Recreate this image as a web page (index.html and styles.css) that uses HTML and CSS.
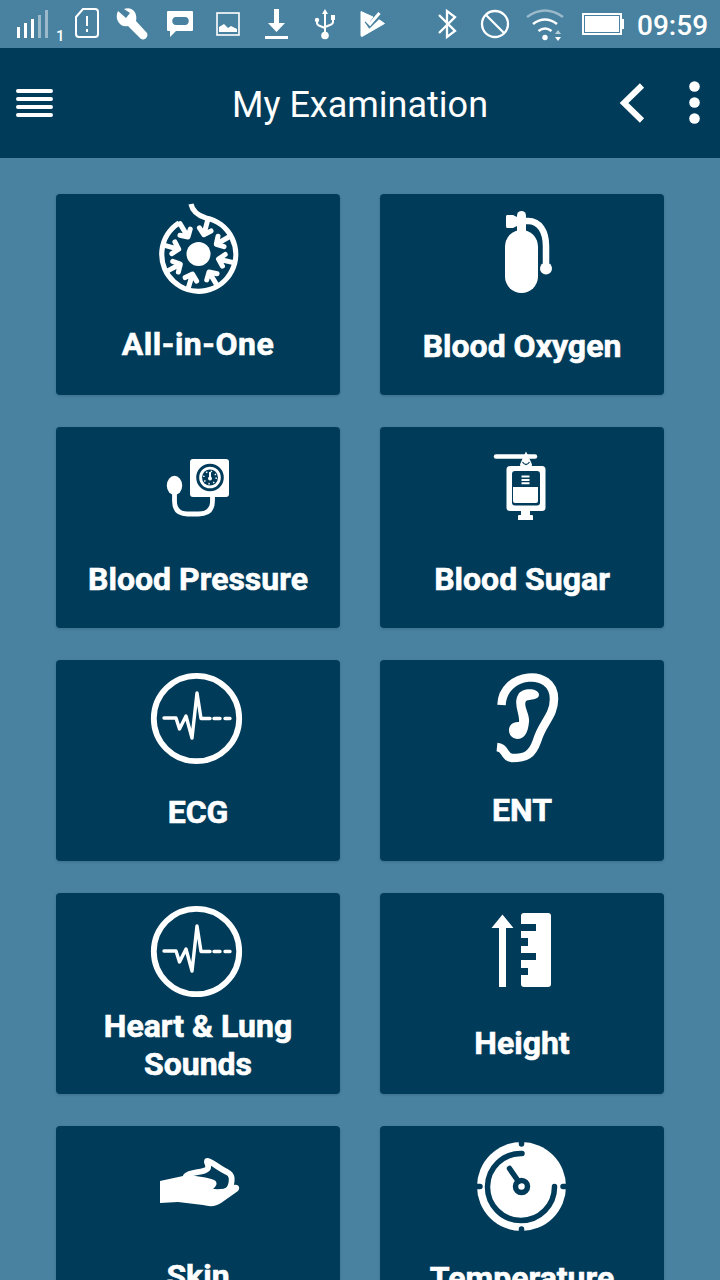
FILE: index.html
```html
<!DOCTYPE html>
<html lang="en">
<head>
<meta charset="utf-8">
<title>My Examination</title>
<link rel="stylesheet" href="styles.css">
</head>
<body>
<div class="statusbar">
  <div class="status-left">
    <svg width="42" height="48" viewBox="12 0 42 48" fill="#fff"><rect x="17" y="27" width="3" height="11"/><rect x="24" y="23" width="3" height="15"/><rect x="31" y="19" width="3" height="19"/><g opacity=".45"><rect x="38" y="15" width="3" height="23"/><rect x="45" y="10" width="3" height="28"/></g></svg>
    <span class="sim">1</span>
    <svg width="38" height="48" viewBox="68 0 38 48" fill="none" stroke="#fff" stroke-width="2"><path d="M83 9h12q3 0 3 3v22q0 3-3 3H79q-3 0-3-3V17z"/><path d="M87 16v10M87 29v3"/></svg>
    <svg width="52" height="48" viewBox="106 0 52 48"><path d="M118 11l8 7 4-5-6-4c8-3 14 4 12 12l11 12c2 4-3 9-7 5l-12-12c-8 2-14-7-10-15z" fill="#fff"/></svg>
    <svg width="48" height="48" viewBox="158 0 48 48"><path fill="#fff" fill-rule="evenodd" d="M168 11h24q1 0 1 1v18q0 1-1 1h-16l-6 6v-6h-2q-1 0-1-1V12q0-1 1-1zm8 6c-5 0-5 8 0 8h9c5 0 5-8 0-8z"/></svg>
    <svg width="46" height="48" viewBox="206 0 46 48"><rect x="217" y="13" width="22" height="22" fill="none" stroke="#fff" stroke-width="1.6"/><path d="M219 32v-5l5-3 4 4 3-2 6 3v3z" fill="#fff"/></svg>
    <svg width="50" height="48" viewBox="252 0 50 48" fill="#fff"><path d="M274 9h5v14h6l-8.500 9-8.500-9h6zM265 36h23v3h-23z"/></svg>
    <svg width="46" height="48" viewBox="302 0 46 48"><g fill="none" stroke="#fff" stroke-width="2"><path d="M325 12v23M317 20v3q0 2 3 3l5 2M333 18v4q0 2-3 3l-5 2"/></g><path d="M325 9l3 5h-6zM331 15h4v5h-4z" fill="#fff"/><circle cx="317" cy="20" r="2.200" fill="#fff"/><circle cx="325" cy="35.500" r="3.800" fill="#fff"/></svg>
    <svg width="46" height="48" viewBox="348 0 46 48"><path d="M361 11.500L373 17l-4 5 3 1 6-4 6.500 4.500L362 36.500q-1 0-1-1z" fill="#fff" stroke="#fff" stroke-linejoin="round"/><path d="M366 21l3.500 5L381 15" fill="none" stroke="#48819f" stroke-width="3.500"/><path d="M366 20l4 4L379.500 13" fill="none" stroke="#fff" stroke-width="3"/></svg>
  </div>
  <div class="status-right">
    <svg width="38" height="48" viewBox="430 0 38 48"><path d="M439 15l16 16-8 6V11l8 6-16 16" fill="none" stroke="#fff" stroke-width="2.300"/></svg>
    <svg width="52" height="48" viewBox="468 0 52 48" fill="none" stroke="#fff" stroke-width="2.300"><circle cx="495" cy="24" r="13"/><path d="M486 15l18 18"/></svg>
    <svg width="56" height="48" viewBox="520 0 56 48" fill="none" stroke="#fff" stroke-width="2.600"><path d="M527 17q18-13 36 0" opacity=".45"/><path d="M533 24q12-9 24 0M538.500 31q6.500-5 13 0"/><circle cx="545" cy="37.500" r="2.700" fill="#fff" stroke="none"/><path d="M555 34l3-4 3 4z" fill="#fff" stroke="none" opacity=".6"/><path d="M555 37h6l-3 4z" fill="#fff" stroke="none"/></svg>
    <svg width="54" height="48" viewBox="576 0 54 48"><path d="M583 14h38v20h-38z" fill="none" stroke="#fff" stroke-width="2"/><path d="M585 16h34v16h-34zM621 19h3v10h-3z" fill="#fff"/></svg>
    <span class="clock">09:59</span>
  </div>
</div>
<header class="appbar">
  <svg class="menu" width="40" height="36" viewBox="14 85 40 36" stroke="#fff" stroke-width="4" stroke-linecap="round"><path d="M18 91h33M18 99h33M18 107h33M18 115h33"/></svg>
  <h1 class="title">My Examination</h1>
  <div class="actions">
    <svg width="60" height="50" viewBox="600 78 60 50"><path d="M642 85.500L624 103 642 120.500" fill="none" stroke="#fff" stroke-width="6"/></svg>
    <svg width="60" height="50" viewBox="660 78 60 50" fill="#fff"><circle cx="694.500" cy="86.500" r="5.300"/><circle cx="694.500" cy="102.500" r="5.300"/><circle cx="694.500" cy="118.500" r="5.300"/></svg>
  </div>
</header>
<main class="grid">
  <section class="card wide">
    <svg class="icon" viewBox="138 194 120 110">
      <defs><path id="spoke" d="M0-36V-22M-6-26L0-20.500L6-26"/></defs>
      <g fill="none" stroke="#fff" stroke-width="5.200">
        <path d="M191 204q2 10 15 14A37 37 0 1 1 179 223"/>
        <g transform="translate(198.500 254.500)" stroke-linecap="round" stroke-linejoin="round" stroke-width="5">
          <use href="#spoke" transform="rotate(15)"/><use href="#spoke" transform="rotate(60)"/><use href="#spoke" transform="rotate(103)"/><use href="#spoke" transform="rotate(149)"/><use href="#spoke" transform="rotate(197)"/><use href="#spoke" transform="rotate(242)"/><use href="#spoke" transform="rotate(285)"/><use href="#spoke" transform="rotate(329)"/>
        </g>
      </g>
      <circle cx="198.500" cy="254" r="12" fill="#fff"/>
    </svg>
    <h2 class="label">All-in-One</h2>
  </section>
  <section class="card">
    <svg class="icon" viewBox="462 194 120 110" fill="#fff">
      <rect x="505" y="230" width="33" height="63" rx="16.500"/><rect x="517" y="211" width="9" height="24" rx="4.500"/><path d="M507 215h6l4 2h9v9h-9l-4 2h-6q-1 0-1-2v-9q0-2 1-2z"/>
      <path d="M524 221h4C540 221 546 232 546 246v22" fill="none" stroke="#fff" stroke-width="6.500"/><circle cx="546" cy="268.500" r="6"/>
    </svg>
    <h2 class="label">Blood Oxygen</h2>
  </section>
  <section class="card">
    <svg class="icon" viewBox="138 427 120 110">
      <rect x="190" y="459" width="39" height="38" rx="3" fill="#fff"/><circle cx="210" cy="477.500" r="12.300" fill="none" stroke="#003c5a" stroke-width="3"/><circle cx="210" cy="477.500" r="8" fill="#003c5a"/><circle cx="210" cy="477.500" r="6.200" fill="none" stroke="#fff" stroke-width="1.500" stroke-dasharray="1.400 3.470"/><path d="M210 472v6" stroke="#fff" stroke-width="2"/><circle cx="210" cy="478.500" r="2" fill="#fff"/>
      <ellipse cx="174.500" cy="485.500" rx="7.700" ry="9.700" fill="#fff"/><path d="M174.500 492v9q0 13 13 13h11q14 0 14-13v-6" fill="none" stroke="#fff" stroke-width="4.800"/>
    </svg>
    <h2 class="label">Blood Pressure</h2>
  </section>
  <section class="card">
    <svg class="icon" viewBox="462 427 120 110">
      <path d="M496 456.500h39" stroke="#fff" stroke-width="4.500" stroke-linecap="round"/><path d="M526 451.500l3 6 3 7q0 4-6 4t-6-4l3-7z" fill="#fff"/><path d="M522.500 462q3.500 5 7 0" stroke="#003c5a" fill="none" stroke-width="1.300"/>
      <rect x="506.500" y="466" width="39" height="45" rx="3.500" fill="#fff"/><rect x="512" y="471" width="28" height="34.500" rx="3" fill="#003c5a"/><path d="M513 487h25v14q0 2-2 2h-21q-2 0-2-2z" fill="#fff"/><path d="M521.500 476.500h8M521.500 480h8M521.500 483.300h8" stroke="#fff" stroke-width="2"/><path d="M521 510h9v5h2q1 0 1 1v4h-15v-4q0-1 1-1h2z" fill="#fff"/>
    </svg>
    <h2 class="label">Blood Sugar</h2>
  </section>
  <section class="card">
    <svg class="icon" viewBox="138 660 120 110" fill="none" stroke="#fff" stroke-linejoin="round" stroke-linecap="round"><circle cx="196.500" cy="718.500" r="42.700" stroke-width="5.800"/><path d="M164 718h12l3.500 11 6.500-13 6 22 5-45 4 25.500h9M214 718.500h6M225 718.500h5" stroke-width="3.400"/></svg>
    <h2 class="label">ECG</h2>
  </section>
  <section class="card raised">
    <svg class="icon" viewBox="462 660 120 110">
      <path d="M501.500 705c1-33 52.500-38 52.500-6 0 17-12 24-17 42-5 14-11 17-25 17-9-1-5-10-15-11" fill="none" stroke="#fff" stroke-width="8.500"/>
      <path d="M519 722c1-8-6-18-1-27 4-8 21-7 21 0 0 5-9 4-13 6-3 5 4 13 3 21-1 10-4 17-12 17-11-1-11-18 2-17z" fill="#fff"/>
    </svg>
    <h2 class="label">ENT</h2>
  </section>
  <section class="card">
    <svg class="icon" viewBox="138 893 120 110" fill="none" stroke="#fff" stroke-linejoin="round" stroke-linecap="round"><circle cx="196.500" cy="951.500" r="42.700" stroke-width="5.800"/><path d="M164 951h12l3.500 11 6.500-13 6 22 5-45 4 25.500h9M214 951.500h6M225 951.500h5" stroke-width="3.400"/></svg>
    <h2 class="label">Heart &amp; Lung Sounds</h2>
  </section>
  <section class="card raised">
    <svg class="icon" viewBox="462 893 120 110" fill="#fff"><path d="M502.500 914.500L513.500 928H506v59h-7v-59h-7.500zM524 913h24q3 0 3 3v68q0 3-3 3h-24q-3 0-3-3v-9h7v-7h-7v-8h15v-7h-15v-7h7v-8h-7v-7h15v-7h-15v-8q0-3 3-3z"/></svg>
    <h2 class="label">Height</h2>
  </section>
  <section class="card raised">
    <svg class="icon" viewBox="138 1126 120 110">
      <path d="M160 1181l23-5c10-1 23 1 31 4 4 2 3 6-1 9 14 1 17-3 21-4 6-1 6 4 4 6l-17 12q-7 5-18 2l-25-3-18 1z" fill="#fff"/><path d="M186 1176c4-5 20-3 22-8 1-4-2-5-1-7 3-1 11 7 20 11 6 3 5 8 4 13q-1 4-5 6" fill="none" stroke="#fff" stroke-width="5.800" stroke-linecap="round" stroke-linejoin="round"/>
    </svg>
    <h2 class="label">Skin</h2>
  </section>
  <section class="card">
    <svg class="icon" viewBox="462 1126 120 110" fill="none" stroke="#003c5a" stroke-width="5.500" stroke-linecap="round">
      <circle cx="521.500" cy="1186.500" r="44.500" fill="#fff" stroke="none"/><path d="M522 1153.500a33.500 33.500 0 1 0 32.500 33"/><path d="M509.500 1168.500l9 13"/><circle cx="521.500" cy="1186.500" r="6"/><path d="M521.500 1140v4M521.500 1229v4M475 1186.500h5M563 1186.500h5"/>
    </svg>
    <h2 class="label">Temperature</h2>
  </section>
</main>
</body>
</html>
```
FILE: styles.css
```css
* { box-sizing: border-box; }
body {
  margin: 0;
  height: 1280px;
  overflow: hidden;
  background: #4882a0;
  color: #fff;
  font-family: Roboto, "Liberation Sans", sans-serif;
}
svg { display: block; flex: none; }
.statusbar {
  display: flex;
  justify-content: space-between;
  height: 48px;
  padding: 0 12px;
}
.status-left, .status-right { display: flex; }
.sim { width: 14px; padding: 27px 0 0 2px; font-size: 15px; line-height: 18px; font-weight: 500; }
.clock { width: 78px; padding-left: 7px; font-size: 28px; line-height: 51px; font-weight: 500; white-space: nowrap; }
.appbar {
  display: grid;
  grid-template-columns: 120px 1fr 120px;
  align-items: center;
  height: 110px;
  background: #003c5a;
}
.menu { margin-left: 14px; }
.title { margin: 4px 0 0; text-align: center; font-size: 36px; line-height: 44px; font-weight: 400; }
.actions { display: flex; }
.grid {
  display: grid;
  grid-template-columns: 284px 284px;
  grid-auto-rows: 201px;
  gap: 32px 40px;
  height: 1122px;
  overflow: hidden;
  padding: 36px 56px;
}
.card {
  display: flex;
  flex-direction: column;
  align-items: center;
  border-radius: 4px;
  background: #003c5a;
  box-shadow: 0 1px 3px rgba(0, 40, 65, .2);
}
.icon { width: 120px; height: 110px; }
.label {
  display: flex;
  align-items: center;
  height: 84px;
  width: 240px;
  margin: 0;
  justify-content: center;
  text-align: center;
  font-size: 32px;
  line-height: 38px;
  font-weight: 700;
  -webkit-text-stroke: .6px #fff;
}
.raised .label, .wide .label { height: 80px; }
.wide .label { letter-spacing: .5px; }
```
